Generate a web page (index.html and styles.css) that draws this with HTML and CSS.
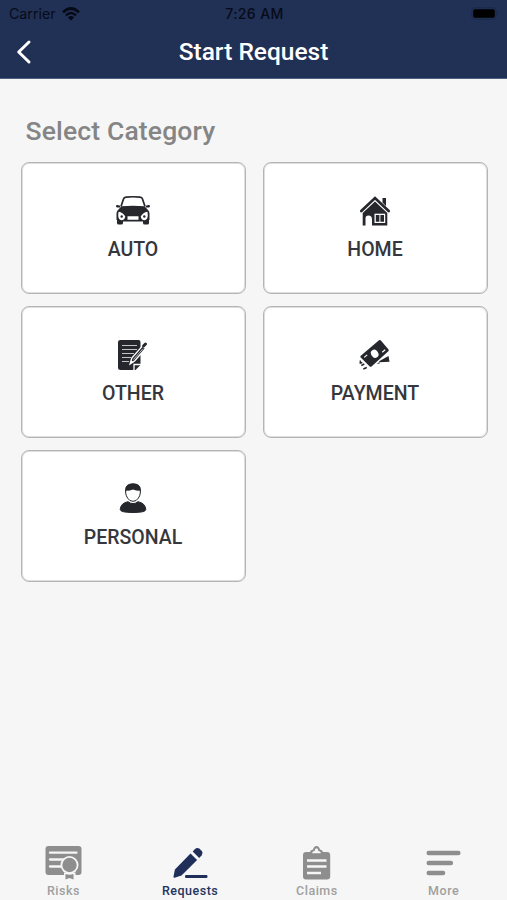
FILE: index.html
```html
<!DOCTYPE html>
<html lang="en">
<head>
<meta charset="utf-8">
<title>Start Request</title>
<link rel="stylesheet" href="styles.css">
</head>
<body>
<header class="header">
  <div class="status">
    <div class="carrier"><span>Carrier</span>
      <svg width="18" height="14" viewBox="0 0 18 14" fill="none" stroke="#050a16"><path d="M1 5.3Q9-2.3 17 5.3" stroke-width="2.7"/><path d="M3.9 8.3Q9 3.6 14.1 8.3" stroke-width="2.4"/><path d="M9 13.5 5.9 10.4Q9 7.7 12.1 10.4Z" fill="#050a16" stroke="none"/></svg>
    </div>
    <div class="time">7:26 AM</div>
    <svg class="battery" width="29" height="13" viewBox="0 0 29 13"><rect x=".8" y=".8" width="24.4" height="11.4" rx="3" fill="none" stroke="#1b2848"/><rect x="2.2" y="2.2" width="21.6" height="8.6" rx="1.8" fill="#000"/><path d="M26.5 4.5q1.6 2 0 4z" fill="#1b2848"/></svg>
  </div>
  <div class="nav">
    <svg class="back" width="20" height="26" viewBox="0 0 20 26" fill="none" stroke="#fff" stroke-width="3" stroke-linecap="round" stroke-linejoin="round"><path d="M15 3 4.7 13 15 23"/></svg>
    <h1>Start Request</h1>
  </div>
</header>
<main>
  <h2>Select Category</h2>
  <div class="grid">
    <button class="card">
      <svg width="40" height="40" viewBox="0 0 40 40" fill="#25272c"><path d="M8 15.5 10.5 8Q11 6.4 13 6.2Q20 5.3 27 6.2Q29 6.4 29.5 8L32 15.5" fill="none" stroke="#25272c" stroke-width="1.7"/><path d="M3 14.6Q3.5 13.6 7.2 14.7L7 16.5H4Q2.6 16 3 14.6ZM37 14.6Q36.5 13.6 32.8 14.7L33 16.5H36Q37.4 16 37 14.6ZM8.5 15.3Q20 14 31.5 15.3L35 19Q36.5 20.3 36.5 22.5V29H36V32Q36 33.5 34.5 33.5H31.5Q30 33.5 30 32V30.5H10V32Q10 33.5 8.5 33.5H5.5Q4 33.5 4 32V29H3.5V22.5Q3.5 20.3 5 19Z"/><g fill="#fff"><path d="M5.5 20.7Q10 21.2 12.3 25.5Q11.7 29.2 8.5 29.2Q5.2 28.5 5.2 24.5ZM34.5 20.7Q30 21.2 27.7 25.5Q28.3 29.2 31.5 29.2Q34.8 28.5 34.8 24.5ZM14.5 25.3H25.5V28.7H14.5Z"/></g><circle cx="8.7" cy="25.5" r="1.2"/><circle cx="31.3" cy="25.5" r="1.2"/></svg>
      <span>AUTO</span>
    </button>
    <button class="card">
      <svg width="40" height="40" viewBox="0 0 40 40" fill="#25272c"><path d="M6.3 20 20 7 33.7 20" fill="none" stroke="#25272c" stroke-width="2.7" stroke-linecap="round"/><path d="M27.5 7h3.5v8L27.5 11.5zM20 10.5 32.3 22V34.5H17V28.5Q17 24.5 13.5 24.5T10.5 28.5V34.5H7.7V22Z"/><rect x="19.5" y="22.7" width="10.7" height="9.3" fill="#fff"/><path d="M20.8 24h3.6v6.7h-3.6zM25.4 24h3.6v6.7h-3.6z"/></svg>
      <span>HOME</span>
    </button>
    <button class="card">
      <svg width="40" height="40" viewBox="0 0 40 40"><path d="M7.5 5H25.5Q27.5 5 27.5 7V30L22.5 35H7.5Q5 35 5 33V7Q5 5 7.5 5Z" fill="#25272c"/><path d="M9 10.5H24M9 14.5H24M9 18.5H21M9 22.5H18M9 26.5H16" stroke="#c4c4c6" stroke-width="1"/><path d="M21 35.5V29.5H28" fill="none" stroke="#fff" stroke-width="1.3"/><path d="M17.2 28.8 18.8 23 29.5 10.9 32.5 13.5 21.8 25.8Z" fill="#25272c" stroke="#fff" stroke-width="1.4"/><path d="M30.5 11 32.5 9" stroke="#25272c" stroke-width="3" stroke-linecap="round"/><path d="M20.5 24.5 30 13.7" stroke="#fff" stroke-width=".7"/><path d="m17.2 28.8 1-3.5 2.5 2z" fill="#fff"/></svg>
      <span>OTHER</span>
    </button>
    <button class="card">
      <svg width="40" height="40" viewBox="0 0 40 40" fill="#25272c"><path d="M5.8 20.8 24 5.3Q25 4.6 25.9 5.6L33.5 14.5Q34.2 15.5 33.3 16.2L16.5 31.5Q15.4 32.3 14.5 31.3L5.5 22.3Q4.9 21.5 5.8 20.8Z"/><ellipse cx="19.7" cy="18.7" rx="3.5" ry="4.3" transform="rotate(-34 19.7 18.7)" fill="#fff"/><path d="m27.2 17.3 3-2.5M9.2 22.4l3-2.5" stroke="#fff" stroke-width="1.2"/><path d="M5.3 25.5v2.5l2-.5M6.3 30.5l3-1.5m-1 5 3.500-1.500" fill="none" stroke="#25272c" stroke-width="1.400"/><path d="m24.500 26 9-5 1 5.700-10.500.5zM21.500 28.500l3-1.300v1.500z"/></svg>
      <span>PAYMENT</span>
    </button>
    <button class="card">
      <svg width="40" height="40" viewBox="0 0 40 40"><path d="M12.7 11Q12.7 5.2 20 5.2T27.3 11V14Q27 17 25.3 19.2Q23.5 22.3 20 22.3T14.7 19.2Q13 17 12.7 14Z" fill="#fff" stroke="#25272c" stroke-width="1"/><path d="M12.3 13.5V11Q12.5 4.3 20 4.3T27.7 11V13.5L26.5 11.5Q23 12 20 10.5Q17 12 13.5 11.5Z" fill="#25272c"/><path d="M7.2 30.5Q7.8 24 15 22.7Q20 26.5 25 22.7Q32.2 24 32.8 30.5Q32.8 33.5 20 33.5T7.2 30.5Z" fill="#25272c" stroke="#25272c" stroke-width="1"/></svg>
      <span>PERSONAL</span>
    </button>
  </div>
</main>
<nav class="tabs">
  <a class="tab">
    <svg width="40" height="36" viewBox="0 0 40 36"><rect x="2.5" y="1" width="36" height="29" rx="3" fill="#8e8e8e"/><path d="M7 7.7H33.5M7 14.5H20M7 21.5H18" stroke="#f6f6f6" stroke-width="2.3" stroke-linecap="round"/><circle cx="26.5" cy="20" r="9" fill="#f6f6f6"/><circle cx="26.5" cy="20" r="7.2" fill="#8e8e8e"/><path d="M21 27.5H32.5V35H21z" fill="#f6f6f6"/><path d="M22.5 29q4 1.5 8 0v5.500l-4-1.500-4 1.500z" fill="#8e8e8e"/></svg>
    <span>Risks</span>
  </a>
  <a class="tab active">
    <svg width="40" height="36" viewBox="0 0 40 36" fill="#1f2f5a"><path d="m20.5 8.5 6.6 6.6L11.5 30.5 4.5 32.7Q3.2 33 3.5 31.6L4.9 24.5Z"/><path d="m22.7 6.600 2.100-2.300Q26.800 2.300 29.300 3.600L32 6.300Q33.400 8.300 31.600 10.400L29.200 12.900Z"/><rect x="15" y="30" width="22.500" height="3" rx="1.200"/></svg>
    <span>Requests</span>
  </a>
  <a class="tab">
    <svg width="40" height="36" viewBox="0 0 40 36"><path d="M9 7H13Q13.5 4.5 16 4.5Q16.8 1 19.5 1T23 4.5Q25.5 4.5 26 7H30Q33.2 7 33.2 10V31.5Q33.2 34.5 30 34.5H9Q6 34.5 6 31.5V10Q6 7 9 7Z" fill="#8e8e8e"/><path d="M15.300 8.200Q15 6.300 17.700 6Q17.700 3.200 19.500 3.200T21.300 6Q24 6.300 23.700 8.200Z" fill="#f6f6f6"/><path d="M10 15.500H29.500M10 21.500H29.500M10 28H24" stroke="#f6f6f6" stroke-width="2.500"/></svg>
    <span>Claims</span>
  </a>
  <a class="tab">
    <svg width="40" height="36" viewBox="0 0 40 36"><path d="M4.700 8H34.400M4.700 18H26.900M4.700 28H19.100" stroke="#8e8e8e" stroke-width="4.400" stroke-linecap="round"/></svg>
    <span>More</span>
  </a>
</nav>
</body>
</html>
```
FILE: styles.css
```css
* { box-sizing: border-box; }
body {
  margin: 0;
  height: 900px;
  display: flex;
  flex-direction: column;
  background: #f6f6f6;
  font-family: Roboto, sans-serif;
  overflow: hidden;
}
.header { height: 79px; background: #213055; border-bottom: 1px solid #4b6282; }
.status {
  height: 27px;
  padding: 0 7px 0 9px;
  display: grid;
  grid-template-columns: 1fr auto 1fr;
  align-items: center;
  font: 500 14px/27px Inter, sans-serif;
  color: #060b18;
}
.carrier { display: flex; align-items: center; gap: 6px; font-weight: 400; font-size: 14.2px; }
.time { letter-spacing: .4px; }
.battery { justify-self: end; }
.nav {
  height: 50px;
  padding: 0 14px;
  display: grid;
  grid-template-columns: 20px 1fr 20px;
  align-items: center;
}
h1 { margin: -2px 0 0; text-align: center; font-size: 24.5px; font-weight: 500; color: #fff; }
main { flex: 1; padding: 0 19.5px 0 20.5px; }
h2 {
  margin: 36px 0 15px 5px;
  font-size: 26.5px;
  line-height: 32px;
  font-weight: 500;
  letter-spacing: .15px;
  color: #858585;
}
.grid {
  display: grid;
  grid-template-columns: 1fr 1fr;
  grid-auto-rows: 132px;
  gap: 12px 17px;
}
.card {
  display: flex;
  flex-direction: column;
  align-items: center;
  padding: 28px 0 0;
  background: #fff;
  border: 1px solid #b5b5b5;
  box-shadow: inset 0 0 0 1px #dedede;
  border-radius: 8px;
  font: 500 19.5px/24px Roboto, sans-serif;
  color: #35373c;
}
.card span { margin-top: 7px; }
.tabs { display: flex; height: 56px; }
.tab {
  flex: 1;
  display: flex;
  flex-direction: column;
  align-items: center;
  font: 500 12.5px/16px Roboto, sans-serif;
  letter-spacing: .5px;
  color: #a0a0a0;
}
.tab svg { margin-top: 1px; }
.tab span { margin-top: 2px; }
.active { color: #24345d; }
```
